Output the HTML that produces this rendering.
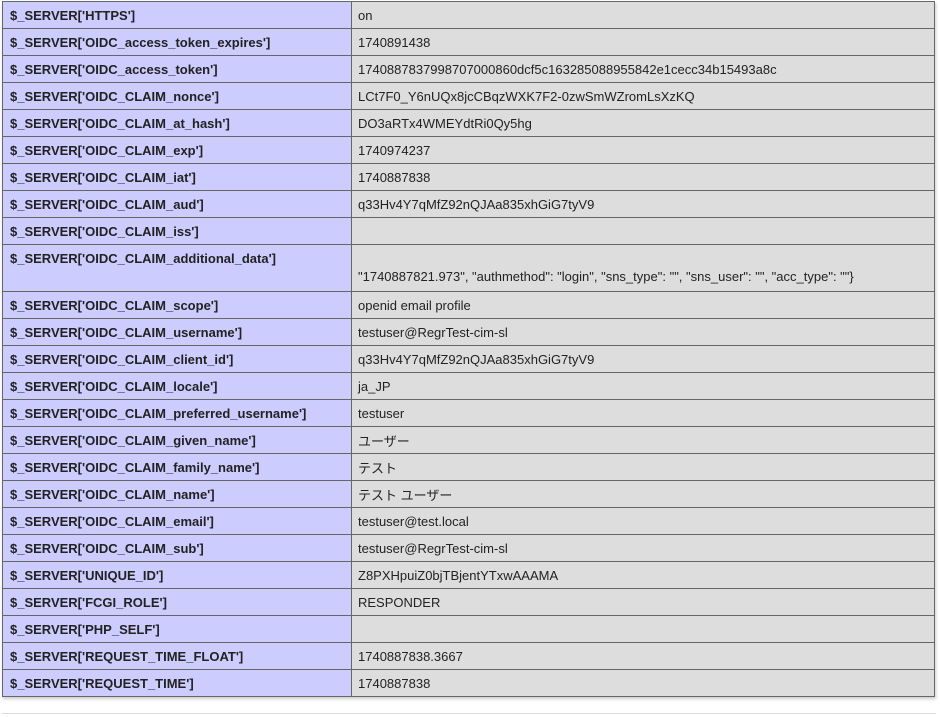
<!DOCTYPE html>
<html><head><meta charset="utf-8"><style>
body{margin:0;background:#fff;width:940px;height:717px;overflow:hidden;position:relative;font-family:"Liberation Sans","Noto Sans CJK JP",sans-serif;font-size:13px;color:#222}
.t{position:absolute;left:2px;top:1px;width:931px;border:1px solid #666;box-shadow:1px 2px 3px #ccc;}
.r{display:flex;border-top:1px solid #666}
.r:first-child{border-top:none}
.e{width:341px;background:#ccf;font-weight:bold;padding-left:7px;border-right:1px solid #666;display:flex;align-items:center}
.v{flex:1;background:#ddd;padding-left:6px;display:flex;align-items:center}
.h{height:26px}
.tall{height:46px}
.tall .v{align-items:flex-end;padding-bottom:7px}
.tall .e{align-items:flex-start;padding-top:6px}
</style></head><body>
<div class="t">
<div class="r h"><div class="e">$_SERVER['HTTPS']</div><div class="v">on</div></div>
<div class="r h"><div class="e">$_SERVER['OIDC_access_token_expires']</div><div class="v">1740891438</div></div>
<div class="r h"><div class="e">$_SERVER['OIDC_access_token']</div><div class="v">1740887837998707000860dcf5c163285088955842e1cecc34b15493a8c</div></div>
<div class="r h"><div class="e">$_SERVER['OIDC_CLAIM_nonce']</div><div class="v">LCt7F0_Y6nUQx8jcCBqzWXK7F2-0zwSmWZromLsXzKQ</div></div>
<div class="r h"><div class="e">$_SERVER['OIDC_CLAIM_at_hash']</div><div class="v">DO3aRTx4WMEYdtRi0Qy5hg</div></div>
<div class="r h"><div class="e">$_SERVER['OIDC_CLAIM_exp']</div><div class="v">1740974237</div></div>
<div class="r h"><div class="e">$_SERVER['OIDC_CLAIM_iat']</div><div class="v">1740887838</div></div>
<div class="r h"><div class="e">$_SERVER['OIDC_CLAIM_aud']</div><div class="v">q33Hv4Y7qMfZ92nQJAa835xhGiG7tyV9</div></div>
<div class="r h"><div class="e">$_SERVER['OIDC_CLAIM_iss']</div><div class="v"></div></div>
<div class="r tall"><div class="e">$_SERVER['OIDC_CLAIM_additional_data']</div><div class="v">"1740887821.973", "authmethod": "login", "sns_type": "", "sns_user": "", "acc_type": ""}</div></div>
<div class="r h"><div class="e">$_SERVER['OIDC_CLAIM_scope']</div><div class="v">openid email profile</div></div>
<div class="r h"><div class="e">$_SERVER['OIDC_CLAIM_username']</div><div class="v">testuser@RegrTest-cim-sl</div></div>
<div class="r h"><div class="e">$_SERVER['OIDC_CLAIM_client_id']</div><div class="v">q33Hv4Y7qMfZ92nQJAa835xhGiG7tyV9</div></div>
<div class="r h"><div class="e">$_SERVER['OIDC_CLAIM_locale']</div><div class="v">ja_JP</div></div>
<div class="r h"><div class="e">$_SERVER['OIDC_CLAIM_preferred_username']</div><div class="v">testuser</div></div>
<div class="r h"><div class="e">$_SERVER['OIDC_CLAIM_given_name']</div><div class="v">ユーザー</div></div>
<div class="r h"><div class="e">$_SERVER['OIDC_CLAIM_family_name']</div><div class="v">テスト</div></div>
<div class="r h"><div class="e">$_SERVER['OIDC_CLAIM_name']</div><div class="v">テスト ユーザー</div></div>
<div class="r h"><div class="e">$_SERVER['OIDC_CLAIM_email']</div><div class="v">testuser@test.local</div></div>
<div class="r h"><div class="e">$_SERVER['OIDC_CLAIM_sub']</div><div class="v">testuser@RegrTest-cim-sl</div></div>
<div class="r h"><div class="e">$_SERVER['UNIQUE_ID']</div><div class="v">Z8PXHpuiZ0bjTBjentYTxwAAAMA</div></div>
<div class="r h"><div class="e">$_SERVER['FCGI_ROLE']</div><div class="v">RESPONDER</div></div>
<div class="r h"><div class="e">$_SERVER['PHP_SELF']</div><div class="v"></div></div>
<div class="r h"><div class="e">$_SERVER['REQUEST_TIME_FLOAT']</div><div class="v">1740887838.3667</div></div>
<div class="r h"><div class="e">$_SERVER['REQUEST_TIME']</div><div class="v">1740887838</div></div>
</div>
<div style="position:absolute;left:2px;top:713px;width:934px;height:1px;background:#ddd"></div>
</body></html>
